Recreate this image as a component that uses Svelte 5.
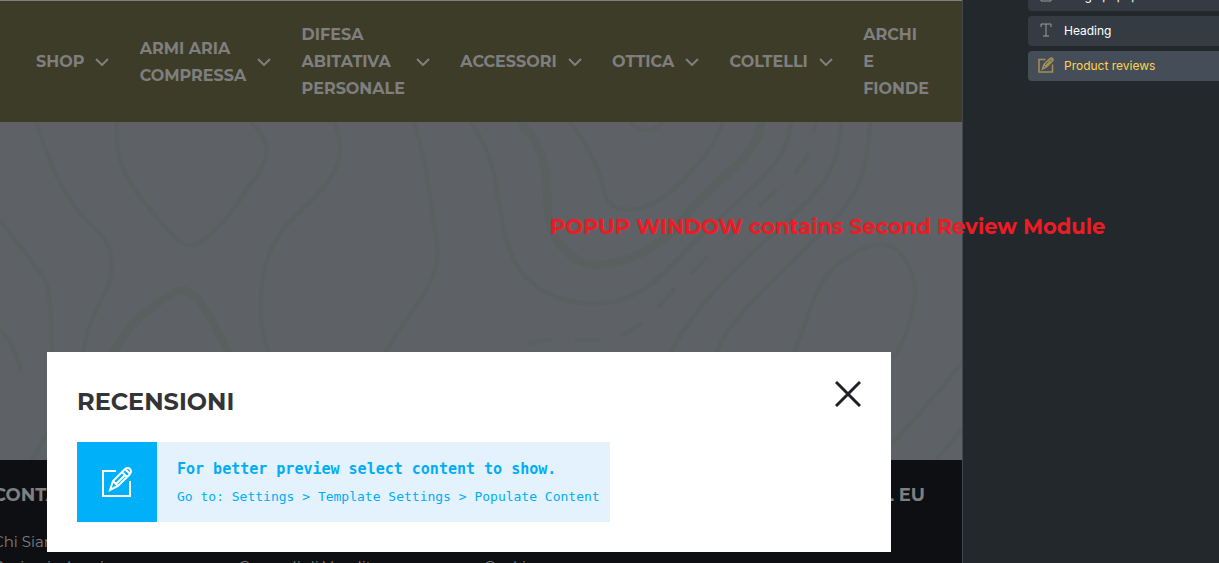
<script lang="ts">
  const menu = [
    { lines: ['SHOP'], arrow: true },
    { lines: ['ARMI ARIA', 'COMPRESSA'], arrow: true },
    { lines: ['DIFESA', 'ABITATIVA', 'PERSONALE'], arrow: true },
    { lines: ['ACCESSORI'], arrow: true },
    { lines: ['OTTICA'], arrow: true },
    { lines: ['COLTELLI'], arrow: true },
    { lines: ['ARCHI', 'E', 'FIONDE'], arrow: false }
  ];

  const contours = [
    'M36 0C50 40 58 66 82 93C99 112 111 118 112 141C112 174 88 188 83 232C79 258 50 306 32 338',
    'M117 0C112 45 133 70 177 118C188 126 198 125 211 112C231 94 239 79 252 60C275 32 268 18 251 0',
    'M334 0C348 33 336 54 313 77C290 99 270 115 263 154C257 190 263 215 271 240',
    'M414 0C430 55 429 75 437 122C441 164 410 185 384 232',
    'M470 0C502 40 493 79 509 126C523 170 570 187 612 180C659 171 677 131 721 95C763 56 788 37 791 0',
    'M570 0C588 24 601 48 605 73C614 96 646 90 671 70C697 45 714 26 723 0',
    'M630 0C643 12 656 10 662 0',
    'M841 0C840 65 798 84 770 115C711 166 684 205 669 232',
    'M870 0C866 63 855 75 823 109C769 164 723 202 716 234',
    'M793 232C814 187 809 169 838 142C864 122 885 115 901 132C921 157 915 177 911 194C907 214 900 227 892 236',
    'M0 98L42 153C51 165 51 190 52 232',
    'M0 208Q15 222 21 250',
    'M891 323Q931 279 963 240',
    'M936 338L963 306'
  ];
  const wideContours = [
    'M520 0C548 30 546 50 548 88C550 122 575 143 597 143C633 141 665 122 691 87C729 46 760 31 761 0',
    'M110 236C131 194 162 178 173 171C187 164 195 172 205 188Q220 211 231 236'
  ];
</script>

{#snippet pencil()}
  <svg viewBox="0 0 32 32" fill="none" stroke="currentColor" stroke-width="2" aria-hidden="true">
    <path d="M15 5H2v25h27V15" />
    <path d="M9 24l3-9L24 3q3-2 5 0 2 2 0 5L17 20zM12 15l5 5M21 6l5 5M24 3l5 5M15 18l9-9" />
  </svg>
{/snippet}

<div class="workspace">
  <main class="preview">
    <nav class="menu">
      {#each menu as item}
        <a href="#menu">
          <span>{#each item.lines as line, i}{#if i}<br />{/if}{line}{/each}</span>
          {#if item.arrow}
            <svg viewBox="0 0 14 8" aria-hidden="true"><path d="M1 1l6 6 6-6" /></svg>
          {/if}
        </a>
      {/each}
    </nav>

    <section class="hero">
      <svg class="map" viewBox="0 0 963 338" preserveAspectRatio="xMinYMin slice" aria-hidden="true">
        {#each contours as d}<path {d} />{/each}
        {#each wideContours as d}<path class="wide" {d} />{/each}
        <path d="M528 222q12-4 24-4M575 218h25M621 213q11-3 21-13M658 185l17-18M691 152l17-18M725 118l13-13M759 84l18-16M794 52q9-9 14-21M814 11l2-11" />
      </svg>
    </section>

    <footer>
      <div class="column">
        <h3>CONTATTI</h3>
        <a href="#about">Chi Siamo</a>
        <a href="#returns">Resi e rimborsi</a>
      </div>
      <div class="column middle">
        <a href="#terms">Generali di Vendita</a>
      </div>
      <div class="column middle">
        <a href="#cookies">Cookie</a>
      </div>
      <div class="column last"><h3>PORTALE DEL EU</h3></div>
    </footer>

    <div class="popup" role="dialog" aria-labelledby="popup-title">
      <header>
        <h2 id="popup-title">RECENSIONI</h2>
        <button type="button" aria-label="Close">
          <svg viewBox="0 0 26 26" aria-hidden="true"><path d="M1 1l24 24M25 1L1 25" /></svg>
        </button>
      </header>
      <div class="notice">
        <div class="notice-icon">{@render pencil()}</div>
        <div class="notice-text">
          <strong>For better preview select content to show.</strong>
          <span>Go to: Settings &gt; Template Settings &gt; Populate Content</span>
        </div>
      </div>
    </div>
  </main>

  <aside>
    <button type="button" class="layer">
      <svg viewBox="0 0 16 16" aria-hidden="true"><path d="M3 2h10v12H3z" /></svg>
      Image popup
    </button>
    <button type="button" class="layer">
      <svg viewBox="0 0 16 16" aria-hidden="true"><path d="M3 5V2h10v3M8 2v12M5 14h6" /></svg>
      Heading
    </button>
    <button type="button" class="layer active">{@render pencil()} Product reviews</button>
  </aside>

  <p class="annotation">POPUP WINDOW contains Second Review Module</p>
</div>

<style>
  :global(body) {
    margin: 0;
    background: #23282c;
  }

  .workspace {
    position: relative;
    display: flex;
    height: 100vh;
    overflow: hidden;
    font-family: Montserrat, Inter, sans-serif;
  }

  .preview {
    position: relative;
    flex: 1;
    display: flex;
    flex-direction: column;
    min-width: 0;
    overflow: hidden;
    border-right: 1px solid #3f4850;
    color: #7f7f7f;
  }

  a {
    color: inherit;
    text-decoration: none;
  }

  .menu {
    display: flex;
    align-items: center;
    justify-content: space-between;
    box-sizing: border-box;
    height: 122px;
    padding: 0 33px 0 36px;
    border-top: 1px solid #7f7f7f;
    background: #3d3c28;
    font-size: 16px;
    font-weight: 700;
    line-height: 27px;
  }

  .menu a {
    display: flex;
    align-items: center;
    gap: 11px;
  }

  .menu svg {
    width: 14px;
    height: 8px;
    fill: none;
    stroke: #7f7f7f;
    stroke-width: 2;
  }

  .hero {
    height: 338px;
    background: #5e6165;
  }

  .map {
    display: block;
    width: 100%;
    height: 100%;
    fill: none;
    stroke: #5a5f60;
    stroke-width: 4;
  }

  .map .wide {
    stroke-width: 8;
  }

  footer {
    flex: 1;
    display: grid;
    grid-template-columns: repeat(4, 1fr);
    min-height: 0;
    margin-right: -20px;
    padding-top: 22px;
    overflow: hidden;
    background: #0e0f13;
    font-size: 15px;
  }

  .column {
    display: flex;
    flex-direction: column;
    margin-left: -7px;
    line-height: 25px;
    white-space: nowrap;
  }

  .column.middle {
    padding-top: 72px;
  }

  .column.last {
    justify-self: end;
    margin-right: 57px;
  }

  h3 {
    margin: 0 0 20px;
    font-size: 18px;
    line-height: 27px;
  }

  .popup {
    position: absolute;
    top: 352px;
    left: 47px;
    right: 71px;
    box-sizing: border-box;
    padding: 28px 30px 30px;
    background: #fff;
    color: #333436;
  }

  header {
    display: flex;
    justify-content: space-between;
    margin-bottom: 20px;
  }

  h2 {
    margin: 0;
    padding-top: 2px;
    font-size: 24px;
    line-height: 40px;
  }

  header button {
    display: flex;
    align-items: center;
    height: 28px;
    padding: 0;
    border: 0;
    background: none;
  }

  header svg {
    width: 26px;
    height: 26px;
    stroke: #202124;
    stroke-width: 3;
  }

  .notice {
    display: flex;
    width: fit-content;
    height: 80px;
    background: #e4f2fe;
    color: #00adf5;
    font-family: Consolas, "DejaVu Sans Mono", monospace;
  }

  .notice-icon {
    display: grid;
    place-items: center;
    width: 80px;
    background: #00b0f8;
    color: #fff;
  }

  .notice-icon svg {
    width: 32px;
    height: 32px;
  }

  .notice-text {
    display: flex;
    flex-direction: column;
    justify-content: center;
    gap: 8px;
    padding: 2px 10px 0 20px;
    font-size: 13px;
    line-height: 20px;
  }

  strong {
    font-size: 15px;
  }

  aside {
    flex: 0 0 191px;
    display: flex;
    flex-direction: column;
    gap: 5px;
    margin-top: -19px;
    padding-left: 65px;
  }

  .layer {
    display: flex;
    align-items: center;
    gap: 10px;
    height: 30px;
    padding: 0 10px 2px;
    border: 0;
    border-radius: 4px 0 0 4px;
    background: #343b42;
    color: #fff;
    font-family: Inter, sans-serif;
    font-size: 12px;
  }

  .layer svg {
    width: 16px;
    height: 16px;
    fill: none;
    stroke: currentColor;
    opacity: 0.5;
  }

  .layer.active {
    background: #454e58;
    color: #ffd34f;
  }

  .layer.active svg {
    stroke-width: 3;
  }

  .annotation {
    position: absolute;
    top: 213px;
    left: 550px;
    margin: 0;
    color: #ed1c24;
    font-size: 21px;
    font-weight: 700;
    line-height: 28px;
    white-space: nowrap;
  }
</style>
